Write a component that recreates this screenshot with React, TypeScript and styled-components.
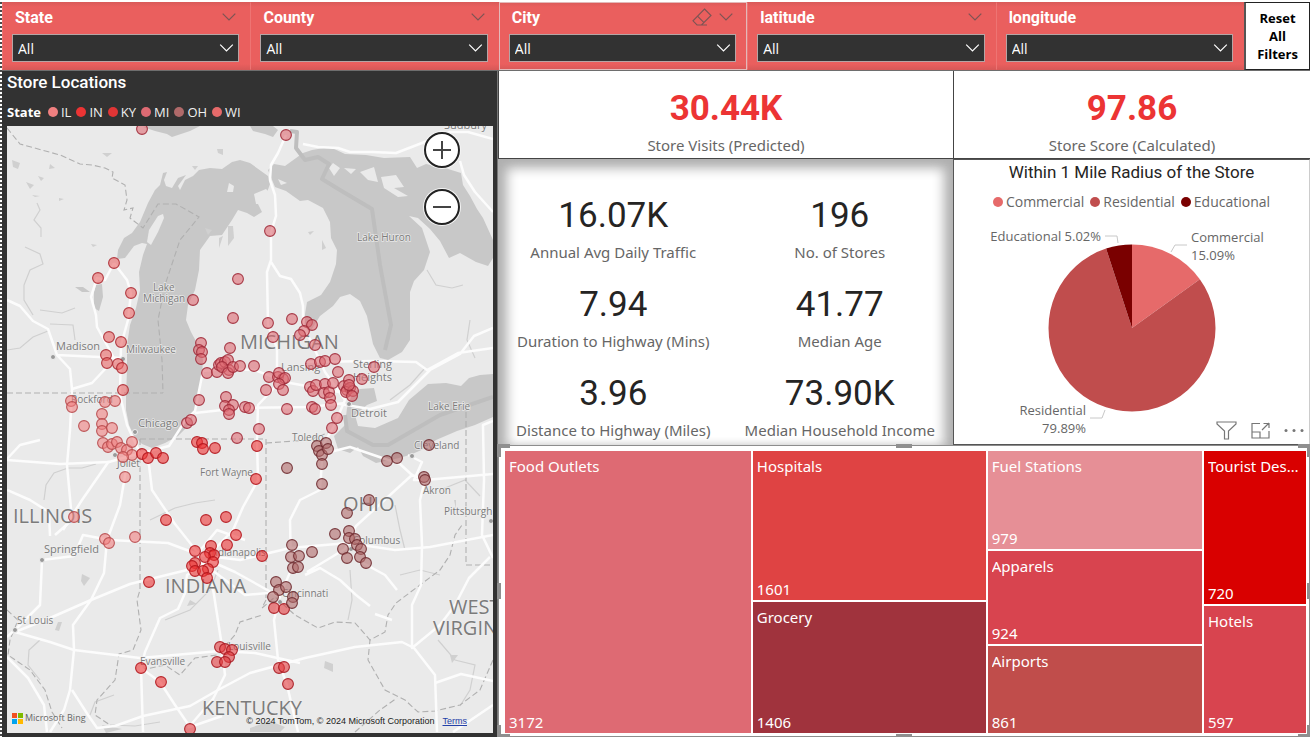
import React from "react";
import styled, { createGlobalStyle } from "styled-components";

const sans = `"Open Sans", "Noto Sans", sans-serif`;
const wideSans = `"Noto Sans", "Open Sans", sans-serif`;
const din = `Roboto, "Liberation Sans", sans-serif`;

const GlobalStyle = createGlobalStyle`
  *, *::before, *::after { box-sizing: border-box; }
  body { margin: 0; background: #fff; font-family: ${sans}; color: #252423; }
  button, select { font: inherit; }
  h2, p, dl, dd, dt, ul { margin: 0; padding: 0; }
`;

const Page = styled.main`
  display: flex;
  flex-direction: column;
  min-height: 100vh;
  padding: 2px 0 0 2px;
  background: repeating-linear-gradient(#4a4a4a 0 2px, #fff 2px 4px) 0 2px / 2px 100% no-repeat #fff;
`;

const FilterBar = styled.header`
  display: flex;
  height: 69px;
  border-bottom: 1px solid #6e6e6e;
  background: linear-gradient(#d95a59 0, #ea5f5e 5px, #ea5f5e 62px, #d65857 100%);
`;

const FilterCell = styled.div<{ $active?: boolean }>`
  flex: 1 1 0;
  min-width: 0;
  padding: 5px 10px 0 9px;
  border: 1px solid ${(p) => (p.$active ? "#e3b9b9" : "transparent")};
  border-left-color: ${(p) => (p.$active ? "#e3b9b9" : "#ee7473")};
`;

const FilterHead = styled.div`
  display: flex;
  align-items: center;
  gap: 7px;
  height: 20px;
  margin-bottom: 6px;
  padding: 0 3px;
`;

const FilterLabel = styled.label`
  flex: 1;
  color: #fff;
  font: 700 16px/20px ${din};
`;

const HeadButton = styled.button`
  display: flex;
  margin-bottom: 3px;
  padding: 0;
  border: 0;
  background: none;
  color: #7c5454;
`;

const SelectWrap = styled.div`
  position: relative;
`;

const Select = styled.select`
  display: block;
  width: 100%;
  height: 28px;
  padding: 0 5px;
  appearance: none;
  border: 1px solid #b5a5a5;
  border-radius: 0;
  background: #323232;
  color: #fff;
  font-size: 14px;
`;

const SelectArrow = styled.span`
  position: absolute;
  right: 5px;
  top: 10px;
  display: flex;
  color: #fff;
  pointer-events: none;
`;

const ResetButton = styled.button`
  flex: 0 0 66px;
  padding: 0 8px;
  border: 1px solid #222;
  border-left: 2px solid #555;
  background: #fff;
  color: #000;
  font: 700 13px/18px ${sans};
`;

const Body = styled.div`
  display: grid;
  grid-template-columns: 496fr 812fr;
  flex: 1;
`;

const MapPanel = styled.section`
  display: flex;
  flex-direction: column;
  min-width: 0;
  padding: 0 4px 4px 5px;
  border-right: 1px solid #777;
  background: #323232;
`;

const MapTitle = styled.h2`
  color: #fff;
  font: 500 17px/22px ${din};
`;

const MapLegend = styled.ul`
  display: flex;
  align-items: center;
  gap: 5px;
  height: 33px;
  padding-top: 5px;
  color: #f0f0f0;
  font-size: 13px;
  list-style: none;
`;

const LegendItem = styled.li<{ $color: string }>`
  display: flex;
  align-items: center;
  gap: 3px;
  &::before {
    content: "";
    width: 10px;
    height: 10px;
    border-radius: 50%;
    background: ${(p) => p.$color};
  }
`;

const LegendTitle = styled.li`
  margin-right: 2px;
  color: #fff;
  font-weight: 700;
`;

const MapCanvas = styled.div`
  position: relative;
  flex: 1;
  min-height: 400px;
  overflow: hidden;
  background: #eaeaea;
`;

const MapSvg = styled.svg`
  position: absolute;
  inset: 0;
  width: 100%;
  height: 100%;
  font-family: ${sans};
`;

const ZoomControls = styled.div`
  position: absolute;
  top: 6px;
  right: 33px;
  display: grid;
  gap: 21px;
`;

const ZoomButton = styled.button`
  display: grid;
  place-items: center;
  width: 36px;
  height: 36px;
  padding: 0;
  border: 2px solid #222;
  border-radius: 50%;
  background: #fff;
  box-shadow: 0 0 0 1px #f4f4f4;
`;

const MapFooter = styled.div`
  position: absolute;
  right: 26px;
  bottom: 6px;
  display: flex;
  gap: 8px;
  color: #222;
  font: 9px/12px "Liberation Sans", sans-serif;
  a { color: #2440a8; }
`;

const Bing = styled.div`
  position: absolute;
  left: 5px;
  bottom: 9px;
  display: flex;
  align-items: center;
  gap: 2px;
  color: #666;
  font-size: 9px;
  line-height: 12px;
`;

const RightSide = styled.div`
  display: flex;
  flex-direction: column;
  min-width: 0;
`;

const CardRow = styled.div`
  display: grid;
  grid-template-columns: 455fr 357fr;
`;

const KpiCard = styled.section`
  height: 88px;
  padding-top: 18px;
  border-bottom: 1px solid #444;
  border-left: 1px solid #444;
  text-align: center;
`;

const KpiValue = styled.p`
  color: #ec3434;
  font: 700 35px/40px ${din};
`;

const Caption = styled.p`
  margin-top: 6px;
  color: #666;
  font-family: ${wideSans};
  font-size: 15px;
  line-height: 20px;
  white-space: nowrap;
`;

const Metrics = styled.section`
  display: grid;
  grid-template-columns: 1fr 1fr;
  align-content: start;
  row-gap: 23px;
  height: 286px;
  padding: 37px 0 0 2px;
  box-shadow: inset 13px 0 12px -4px #b0b0b0, inset -13px 0 12px -4px #b0b0b0, inset 0 13px 12px -4px #b0b0b0;
  text-align: center;
`;

const MetricValue = styled.p`
  color: #252423;
  font: 400 35px/40px ${din};
`;

const PiePanel = styled.section`
  position: relative;
  display: flex;
  flex-direction: column;
  height: 286px;
  border: 1px solid #555;
  border-right-color: #ccc;
`;

const PieTitle = styled.h2`
  color: #252423;
  font: 400 17px/24px ${din};
  text-align: center;
`;

const PieLegend = styled.ul`
  display: flex;
  justify-content: center;
  gap: 6px;
  margin-top: 8px;
  color: #666;
  font-size: 14px;
  line-height: 20px;
  list-style: none;
`;

const PieSvg = styled.svg`
  flex: 1;
  width: 100%;
  min-height: 0;
  font-family: ${sans};
`;

const VisualActions = styled.div`
  position: absolute;
  right: 5px;
  bottom: 4px;
  display: flex;
  align-items: center;
  gap: 14px;
`;

const ActionButton = styled.button`
  display: flex;
  padding: 0;
  border: 0;
  background: none;
`;

const Treemap = styled.section`
  position: relative;
  display: flex;
  flex: 1;
  gap: 2px;
  min-height: 291px;
  padding: 5px 3px 3px 6px;
  border: 1px solid #8d8d8d;
`;

const TreeColumn = styled.div<{ $total: number }>`
  display: flex;
  flex: ${(p) => p.$total} 1 0;
  flex-direction: column;
  gap: 2px;
  min-width: 0;
`;

const Tile = styled.div<{ $count: number; $color: string }>`
  display: flex;
  flex: ${(p) => p.$count} 1 0;
  flex-direction: column;
  justify-content: space-between;
  min-height: 0;
  padding: 5px 3px 0 4px;
  background: ${(p) => p.$color};
  color: #fff;
  font-family: ${wideSans};
  font-size: 15px;
  line-height: 21px;
`;

const TileName = styled.span`
  overflow: hidden;
  text-overflow: ellipsis;
  white-space: nowrap;
`;

const Handle = styled.span<{ $x: "left" | "center" | "right"; $y: "top" | "middle" | "bottom" }>`
  position: absolute;
  ${(p) => (p.$x === "center" ? "left: calc(50% - 8px);" : `${p.$x}: -2px;`)}
  ${(p) => (p.$y === "middle" ? "top: calc(50% - 8px);" : `${p.$y}: -2px;`)}
  width: ${(p) => (p.$y === "middle" ? 4 : p.$x === "center" ? 16 : 13)}px;
  height: ${(p) => (p.$x === "center" ? 4 : p.$y === "middle" ? 16 : 13)}px;
  border: 0 solid #8f8f8f;
  ${(p) => (p.$y !== "middle" ? `border-${p.$y}-width: 4px;` : "")}
  ${(p) => (p.$x !== "center" ? `border-${p.$x}-width: 4px;` : "")}
`;

const Chevron = ({ width = 14 }: { width?: number }) => (
  <svg width={width} height="8" viewBox="0 0 14 8" fill="none" stroke="currentColor" strokeWidth="1.2" aria-hidden="true">
    <path d="M.7.7 7 7 13.3.7" />
  </svg>
);

const Eraser = () => (
  <svg width="20" height="18" viewBox="0 0 20 18" fill="none" stroke="currentColor" strokeWidth="1.1" aria-hidden="true">
    <path d="M12.5 1 19 7.5 9.5 17H5L1 12.8ZM5.5 8.2 12 14.7M5 17h10" />
  </svg>
);

const filters = [
  { name: "State", arrow: true },
  { name: "County", arrow: true },
  { name: "City", arrow: true, active: true },
  { name: "latitude", arrow: true },
  { name: "longitude", arrow: false },
];

const stateLegend = [
  ["IL", "#f08080"],
  ["IN", "#ec3434"],
  ["KY", "#e03535"],
  ["MI", "#de6a73"],
  ["OH", "#b06a6a"],
  ["WI", "#e66a6a"],
];

type Point = [number, number];

const stores: { fill: string; stroke: string; points: Point[] }[] = [
  {
    fill: "#e96565", stroke: "#ad2a32",
    points: [[114,263],[98,278],[131,293],[129,313],[109,337],[121,342],[106,355],[107,363],[118,364],[122,368],[123,390]],
  },
  {
    fill: "#f08080", stroke: "#b84a4d",
    points: [[71,401],[72,407],[105,402],[115,401],[102,414],[102,424],[102,431],[112,428],[84,426],[103,443],[108,447],[112,444],[117,442],[121,448],[127,450],[132,442],[132,455],[123,457],[125,477],[74,517],[105,539],[109,543],[135,537]],
  },
  {
    fill: "#de6a73", stroke: "#a02a38",
    points: [[142,129],[193,300],[238,279],[233,318],[286,135],[270,231],[268,323],[292,319],[307,322],[312,325],[304,331],[300,335],[201,343],[199,350],[202,352],[201,359],[207,373],[217,372],[219,365],[221,363],[225,362],[228,360],[229,370],[222,367],[228,373],[233,367],[240,366],[230,348],[199,400],[187,423],[191,420],[226,397],[225,406],[233,405],[229,410],[229,414],[245,407],[249,408],[237,438],[254,366],[269,377],[273,337],[315,345],[266,390],[278,377],[283,379],[279,373],[285,378],[279,384],[283,390],[287,409],[259,429],[311,364],[320,362],[325,361],[335,359],[338,372],[310,387],[313,391],[316,385],[325,384],[324,393],[329,392],[330,398],[331,405],[333,383],[312,407],[315,409],[337,418],[332,428],[344,386],[349,380],[347,390],[350,388],[346,392],[353,391],[352,396],[349,385],[362,379],[374,367]],
  },
  {
    fill: "#ec3434", stroke: "#b3141b",
    points: [[142,454],[148,458],[156,453],[163,458],[197,442],[202,443],[203,449],[215,448],[166,520],[206,520],[226,517],[257,446],[256,479],[262,556],[236,535],[227,545],[211,546],[195,551],[210,553],[214,555],[205,557],[195,563],[192,566],[213,562],[208,569],[195,571],[203,571],[207,578],[149,582],[141,668],[161,682]],
  },
  {
    fill: "#e23a3e", stroke: "#a91820",
    points: [[274,608],[284,609],[279,668],[284,667],[288,684],[220,647],[225,649],[232,650],[229,657],[217,662],[225,662],[190,729]],
  },
  {
    fill: "#b06a6a", stroke: "#6f2b30",
    points: [[287,468],[317,446],[326,443],[319,451],[322,455],[328,449],[322,464],[322,484],[387,461],[397,458],[429,445],[424,477],[425,480],[369,500],[347,513],[349,531],[335,534],[349,538],[343,549],[355,539],[357,545],[361,549],[347,558],[360,557],[366,563],[312,552],[292,545],[291,557],[299,556],[293,568],[298,567],[276,582],[279,590],[286,587],[273,597],[293,597],[292,603]],
  },
];

const water = [
  "M250 163L240 160 232 162 222 169 210 168 199 170 193 176 185 180 180 190 178 186 186 175 178 178 172 188 166 186 164 180 167 172 163 173 160 185 155 190 148 203 140 222 132 233 124 238 118 250 117 259 125 258 134 246 142 243 147 244 143 255 139 272 140 290 136 308 130 325 127 345 127 370 126 395 126 410 129 425 134 436 142 444 152 448 165 443 178 436 190 424 198 400 202 375 203 360 198 345 191 332 186 320 188 305 195 290 199 270 200 250 210 236 222 235 232 220 238 210 247 213 254 217 262 212 256 200 265 198 270 184 268 176Z",
  "M268 170L274 164 285 166 303 153 312 150 330 147 345 154 366 155 384 158 410 157 417 168 426 164 445 168 461 173 463 185 470 196 477 209 483 218 493 240V258L488 266 476 262 460 253 449 258 440 241 430 229 418 218 409 216 422 228 430 252 424 270 414 281 410 292V340L402 352 388 360 380 358 373 344 367 316 360 301 350 294 340 297 333 306 320 316 310 332 305 326 305 314 307 302 321 295 330 282 336 264 337 250 331 238 330 222 323 208 308 200 300 201 286 191 275 187Z",
  "M143 127L155 131 167 134 172 137 181 134 190 131 200 126H148Z",
  "M250 126L253 131 265 134 273 137 278 130 273 126Z",
  "M334 436L345 425 347 408 353 392 360 389 374 388 377 401 367 405 355 415 358 426 375 428 398 418 409 400 428 384 446 383 461 386 469 378 480 375 493 374V417L475 425 457 431 436 440 426 448 410 455 395 459 376 463 363 456 358 447 350 453 338 449Z",
  "M96 285L102 284 103 297 99 311 94 308 94 292Z",
  "M75 287L83 287 90 292 82 292Z",
];

const land = [
  "M158 216L163 214 164 218 158 232 151 245 147 242 149 230Z",
  "M254 194L266 189 272 195 268 204 256 204Z",
  "M229 183L234 186 233 192 227 192Z",
  "M333 163L340 168 334 176 329 168ZM344 168L356 169 351 174ZM360 172L374 167 378 182 368 180ZM381 177L396 175 404 187 394 188 408 196 398 197 384 188ZM278 179L287 183 281 185Z",
];

const roads = [
  "M286 135L278 153 271 165 270 180 275 195 276 216 271 232 271 260 267 272 268 325 277 348 277 385 258 405 257 440 258 480 243 507 233 530 212 552",
  "M271 262L280 276 291 279 300 293 303 306V325L315 350 325 372 345 400 333 428 323 445 320 490 300 500 290 520 291 570 280 596 274 620 278 660 287 685 298 732",
  "M303 144L318 147 338 148 350 152 372 152 396 153 422 143 450 132 468 132 493 139M460 161L464 175 475 192 493 212",
  "M114 263L105 280 97 278 91 297 96 315 97 327 108 347 116 362M114 263L127 280 131 293 128 320 121 345 120 395 127 425 139 451 149 465 152 490 175 524 198 553",
  "M7 300L20 306 33 321 48 329 57 355 70 369 72 389 70 430 67 465 72 520 55 535M57 355L120 358M72 389L92 383 107 367",
  "M7 460L60 464 109 462 130 456 169 446 185 421 195 411 203 371 222 369 254 370 290 383 345 393",
  "M195 413L240 408 310 407 345 403M7 459L20 445 40 440M7 490L30 500 49 512 50 536M109 461L82 500 63 530",
  "M126 470L120 505 107 540 104 573 91 600 73 625 74 650 70 690 64 710 50 732M72 690L88 715 97 728 115 726 143 716 190 706 218 690 250 673 305 658 355 647 402 642 414 648 435 675 437 732",
  "M42 560L74 556 83 535 110 540 168 543 200 555 240 560 290 548 348 543 395 550 430 547 493 535",
  "M15 632L50 618 91 600 130 584 195 568M15 632L50 642 74 650 140 658 220 651 255 653 300 663M7 637L18 627 40 605 42 560M7 657L28 678 44 705 47 732",
  "M141 668L145 652 160 618 178 609 185 593 187 575 208 560 214 595 221 640 225 675 213 699 188 728M141 668L160 682 175 705 190 727 222 716M141 668L143 732",
  "M307 572L345 549 356 526 390 495 412 475 425 480 420 500 422 545 421 585 412 605 412 648 440 625 455 605 469 578 490 557M305 575L320 568 340 580 356 595 370 606M375 614L392 620",
  "M340 404L370 409 398 402 430 370 460 354 474 336 493 328M306 362L375 361 416 362 427 370 458 353 493 348",
  "M322 454L350 447 400 464 412 475M408 455L422 462 414 480 425 480 493 474M493 421L483 425 484 480 482 535 493 558M435 683L461 674 493 681M453 732L493 705",
  "M198 553L217 530 245 540M208 560L235 572 280 597M212 570L245 595 280 592M363 563L385 575 397 590",
];

const rivers = [
  "M37 203L40 210 34 220 41 228V237M25 247L40 254 43 264 30 270 24 285 24 300 33 315M7 350L20 348 33 337 48 331M50 324L73 325 75 340M40 310L62 313 75 308",
  "M96 464L82 468 68 468 54 473 46 485 44 500M150 520L175 508 195 503 215 500M40 640L29 650 28 665 40 680M90 715L95 702 114 695",
  "M165 620L190 610 210 590 218 570M350 570L352 600 348 620M427 270L436 285 452 288 463 285M470 320L467 340 475 358M390 400L410 385 425 368",
  "M440 490L465 480 480 496M405 550L400 530 395 505M438 640L455 660 475 665 470 690 460 706M110 725L135 726 160 722M400 575L420 570 440 575",
];

const borders = [
  "M7 128L20 144 60 155 80 164 92 165 105 168 113 172 112 178 125 185 127 200 124 210 133 208 130 218 143 228 158 204 176 204 199 217 180 240 165 285 158 320 162 360 163 393M7 393H163",
  "M140 439H266V600M140 439L140 590 137 600 141 630 133 650 119 654 115 680 97 700 95 715 110 725M266 443L310 440 334 430",
  "M466 412V565H493M266 600L262 608 275 597 295 615 318 628 335 622 355 623 370 640 385 632 388 615 396 603 420 585 440 570 450 555 455 535 462 525",
  "M141 670L165 665 180 675 195 658 217 655 235 635 240 622 262 615M370 640L368 660 385 690 405 700 418 712 435 711 460 705 480 690 493 660",
  "M7 610L18 620 10 640 8 655 30 670 45 690 52 712 62 728M355 732L380 710 397 698",
];

const speckles =
  "M12 160l8 3-2 6-5-2zM26 182l8 3-4 4zM38 176l6 2-3 3zM50 164l5 4-6 1zM102 153l10 0-5 4zM217 149l6 0 0 6-5-2zM192 166l6 0-3 4zM91 244l6 1-4 2zM32 195l8 1-5 1zM59 198l5 1-5 2zM205 228l7 2-4 5zM228 226l5 0 1 12-6 8zM219 238l4-2-4 12zM308 232l6-1-4 4zM322 240l4 8-4 2zM58 622l4 0-3 9-4-1zM190 600l7 4-10 2zM325 661l8 3 0 8-9-4zM82 574l8 4-6 8-3-5zM250 728l20-7 15 6-5 5h-30zM102 725l20 4-16 4zM450 655l8 0-6 8zM454 500l2 0 0 9z";

const labels: { x: number; y: number; size: number; text: string }[] = [
  { x: 444, y: 129, size: 11, text: "Sudbury" },
  { x: 357, y: 241, size: 10, text: "Lake Huron" },
  { x: 153, y: 291, size: 10, text: "Lake" },
  { x: 143, y: 302, size: 10, text: "Michigan" },
  { x: 56, y: 350, size: 11, text: "Madison" },
  { x: 126, y: 353, size: 10, text: "Milwaukee" },
  { x: 240, y: 349, size: 20, text: "MICHIGAN" },
  { x: 281, y: 371, size: 11, text: "Lansing" },
  { x: 353, y: 368, size: 11, text: "Sterling" },
  { x: 353, y: 381, size: 11, text: "Heights" },
  { x: 71, y: 403, size: 10, text: "Rockford" },
  { x: 138, y: 427, size: 11, text: "Chicago" },
  { x: 351, y: 417, size: 11, text: "Detroit" },
  { x: 428, y: 410, size: 10, text: "Lake Erie" },
  { x: 292, y: 441, size: 10, text: "Toledo" },
  { x: 414, y: 449, size: 10, text: "Cleveland" },
  { x: 117, y: 467, size: 10, text: "Joliet" },
  { x: 200, y: 476, size: 10, text: "Fort Wayne" },
  { x: 423, y: 494, size: 10, text: "Akron" },
  { x: 13, y: 523, size: 20, text: "ILLINOIS" },
  { x: 343, y: 511, size: 20, text: "OHIO" },
  { x: 444, y: 515, size: 10, text: "Pittsburgh" },
  { x: 44, y: 553, size: 11, text: "Springfield" },
  { x: 209, y: 556, size: 10, text: "Indianapolis" },
  { x: 353, y: 544, size: 10, text: "Columbus" },
  { x: 165, y: 593, size: 20, text: "INDIANA" },
  { x: 282, y: 597, size: 10, text: "Cincinnati" },
  { x: 449, y: 614, size: 20, text: "WEST" },
  { x: 433, y: 635, size: 20, text: "VIRGINIA" },
  { x: 17, y: 624, size: 10, text: "St Louis" },
  { x: 228, y: 650, size: 10, text: "Louisville" },
  { x: 140, y: 665, size: 10, text: "Evansville" },
  { x: 202, y: 715, size: 20, text: "KENTUCKY" },
];

const cities: Point[] = [[53,357],[123,359],[135,432],[115,455],[349,404],[412,456],[42,560],[15,630],[280,602],[351,549],[491,521]];

const StoreMap = () => (
  <MapSvg viewBox="7 126 486 607" preserveAspectRatio="xMidYMid slice" role="img" aria-label="Map of store locations">
    <rect x="7" y="126" width="486" height="607" fill="#eaeaea" />
    <g fill="#c8c8c8">{water.map((d) => <path key={d} d={d} />)}</g>
    <g fill="#eaeaea">{land.map((d) => <path key={d} d={d} />)}</g>
    <path d={speckles} fill="#d0d0d0" />
    <g fill="none" stroke="#d0d0d0" strokeWidth="1.2">{rivers.map((d) => <path key={d} d={d} />)}</g>
    <g fill="none" stroke="#bebebe" strokeWidth="4" strokeLinejoin="round">
      <path d="M290 131L297 132 296 148 305 160 318 157 329 164 322 179 340 190 372 209 380 265 391 325 385 350" />
      <path d="M345 415L347 431 373 445 388 445 440 415 493 397" />
    </g>
    <g fill="none" stroke="#b0b0b0" strokeWidth="1.1" strokeDasharray="6 3">{borders.map((d) => <path key={d} d={d} />)}</g>
    <g fill="none" stroke="#fcfcfc" strokeWidth="2.5" strokeLinejoin="round">{roads.map((d) => <path key={d} d={d} />)}</g>
    <g fill="#999" stroke="#eee">{cities.map(([x, y]) => <circle key={`${x}-${y}`} cx={x} cy={y} r="2.5" />)}</g>
    <g fill="#7b7b7b" stroke="#f0f0f0" strokeWidth="1.5" strokeOpacity=".8" paintOrder="stroke">
      {labels.map((l) => <text key={l.text} x={l.x} y={l.y} fontSize={l.size}>{l.text}</text>)}
    </g>
    {stores.map((s) => (
      <g key={s.fill} fill={s.fill} fillOpacity=".6" stroke={s.stroke} strokeOpacity=".9" strokeWidth="1.1">
        {s.points.map(([x, y]) => <circle key={`${x}-${y}`} cx={x} cy={y} r="5.4" />)}
      </g>
    ))}
  </MapSvg>
);

const metrics = [
  ["16.07K", "Annual Avg Daily Traffic"],
  ["196", "No. of Stores"],
  ["7.94", "Duration to Highway (Mins)"],
  ["41.77", "Median Age"],
  ["3.96", "Distance to Highway (Miles)"],
  ["73.90K", "Median Household Income"],
];

const slices = [
  { name: "Commercial", share: 15.09, color: "#e66a6a" },
  { name: "Residential", share: 79.89, color: "#c04d4d" },
  { name: "Educational", share: 5.02, color: "#7a0000" },
];

const pieCenter = { x: 178, y: 115, r: 83.5 };

const rim = (percent: number) => {
  const a = (percent / 100) * Math.PI * 2;
  return `${pieCenter.x + pieCenter.r * Math.sin(a)} ${pieCenter.y - pieCenter.r * Math.cos(a)}`;
};

const Pie = () => {
  let start = 0;
  return (
    <PieSvg viewBox="0 0 355 230" role="img" aria-label="Share of surroundings within one mile">
      {slices.map((s) => {
        const end = start + s.share;
        const d = `M${pieCenter.x} ${pieCenter.y}L${rim(start)}A${pieCenter.r} ${pieCenter.r} 0 ${s.share > 50 ? 1 : 0} 1 ${rim(end)}Z`;
        start = end;
        return <path key={s.name} d={d} fill={s.color} />;
      })}
      <g fill="none" stroke="#c8c8c8">
        <path d="M151 23H163L164 30M217 39L221 32H233M136 205H148L151 197" />
      </g>
      <g fill="#666" fontSize="13">
        <text x="147" y="28" textAnchor="end">Educational 5.02%</text>
        <text x="237" y="29">Commercial</text>
        <text x="237" y="47">15.09%</text>
        <text x="132" y="202" textAnchor="end">Residential</text>
        <text x="132" y="220" textAnchor="end">79.89%</text>
      </g>
    </PieSvg>
  );
};

const treeColumns = [
  [{ name: "Food Outlets", count: 3172, color: "#de6a73" }],
  [
    { name: "Hospitals", count: 1601, color: "#df4343" },
    { name: "Grocery", count: 1406, color: "#a0333d" },
  ],
  [
    { name: "Fuel Stations", count: 979, color: "#e68f96" },
    { name: "Apparels", count: 924, color: "#d8444f" },
    { name: "Airports", count: 861, color: "#c04d4b" },
  ],
  [
    { name: "Tourist Destinations", count: 720, color: "#d90000" },
    { name: "Hotels", count: 597, color: "#d8444f" },
  ],
];

export default function App() {
  return (
    <>
      <GlobalStyle />
      <Page>
        <FilterBar>
          {filters.map((f) => (
            <FilterCell key={f.name} $active={f.active}>
              <FilterHead>
                <FilterLabel htmlFor={`filter-${f.name}`}>{f.name}</FilterLabel>
                {f.active && <HeadButton aria-label="Clear selections"><Eraser /></HeadButton>}
                {f.arrow && <HeadButton aria-label={`${f.name} options`}><Chevron /></HeadButton>}
              </FilterHead>
              <SelectWrap>
                <Select id={`filter-${f.name}`} defaultValue="All"><option>All</option></Select>
                <SelectArrow><Chevron width={15} /></SelectArrow>
              </SelectWrap>
            </FilterCell>
          ))}
          <ResetButton>Reset All Filters</ResetButton>
        </FilterBar>
        <Body>
          <MapPanel>
            <MapTitle>Store Locations</MapTitle>
            <MapLegend>
              <LegendTitle>State</LegendTitle>
              {stateLegend.map(([name, color]) => <LegendItem key={name} $color={color}>{name}</LegendItem>)}
            </MapLegend>
            <MapCanvas>
              <StoreMap />
              <ZoomControls>
                <ZoomButton aria-label="Zoom in">
                  <svg width="18" height="18" stroke="#444" strokeWidth="2" aria-hidden="true"><path d="M0 9H18M9 0V18" /></svg>
                </ZoomButton>
                <ZoomButton aria-label="Zoom out">
                  <svg width="18" height="18" stroke="#444" strokeWidth="2" aria-hidden="true"><path d="M0 9H18" /></svg>
                </ZoomButton>
              </ZoomControls>
              <Bing>
                <svg width="11" height="11" aria-hidden="true">
                  <path fill="#f25022" d="M0 0h5v5H0z" /><path fill="#7fba00" d="M6 0h5v5H6z" />
                  <path fill="#00a4ef" d="M0 6h5v5H0z" /><path fill="#ffb900" d="M6 6h5v5H6z" />
                </svg>
                Microsoft Bing
              </Bing>
              <MapFooter>
                <span>© 2024 TomTom, © 2024 Microsoft Corporation</span>
                <a href="#terms">Terms</a>
              </MapFooter>
            </MapCanvas>
          </MapPanel>
          <RightSide>
            <CardRow>
              <KpiCard><KpiValue>30.44K</KpiValue><Caption>Store Visits (Predicted)</Caption></KpiCard>
              <KpiCard><KpiValue>97.86</KpiValue><Caption>Store Score (Calculated)</Caption></KpiCard>
              <Metrics>
                {metrics.map(([value, name]) => (
                  <div key={name}><MetricValue>{value}</MetricValue><Caption>{name}</Caption></div>
                ))}
              </Metrics>
              <PiePanel>
                <PieTitle>Within 1 Mile Radius of the Store</PieTitle>
                <PieLegend>
                  {slices.map((s) => <LegendItem key={s.name} $color={s.color}>{s.name}</LegendItem>)}
                </PieLegend>
                <Pie />
                <VisualActions>
                  <ActionButton aria-label="Filters">
                    <svg width="21" height="19" viewBox="0 0 21 19" fill="none" stroke="#777" strokeWidth="1.2"><path d="M1 1H20V3L12.5 10V18H8.5V10L1 3Z" /></svg>
                  </ActionButton>
                  <ActionButton aria-label="Focus mode">
                    <svg width="19" height="17" viewBox="0 0 19 17" fill="none" stroke="#777" strokeWidth="1.2"><path d="M9 1.5H1V16H18V9M1 10H9V16M11 8 18 1M12.5 1.5H18V6" /></svg>
                  </ActionButton>
                  <ActionButton aria-label="More options">
                    <svg width="20" height="5" fill="#777"><circle cx="2" cy="2.5" r="1.5" /><circle cx="10" cy="2.5" r="1.5" /><circle cx="18" cy="2.5" r="1.5" /></svg>
                  </ActionButton>
                </VisualActions>
              </PiePanel>
            </CardRow>
            <Treemap>
              {treeColumns.map((col) => (
                <TreeColumn key={col[0].name} $total={col.reduce((sum, t) => sum + t.count, 0)}>
                  {col.map((t) => (
                    <Tile key={t.name} $count={t.count} $color={t.color}>
                      <TileName>{t.name}</TileName><span>{t.count}</span>
                    </Tile>
                  ))}
                </TreeColumn>
              ))}
              <Handle $x="left" $y="top" /><Handle $x="center" $y="top" /><Handle $x="right" $y="top" />
              <Handle $x="left" $y="middle" /><Handle $x="right" $y="middle" />
              <Handle $x="left" $y="bottom" /><Handle $x="center" $y="bottom" /><Handle $x="right" $y="bottom" />
            </Treemap>
          </RightSide>
        </Body>
      </Page>
    </>
  );
}
